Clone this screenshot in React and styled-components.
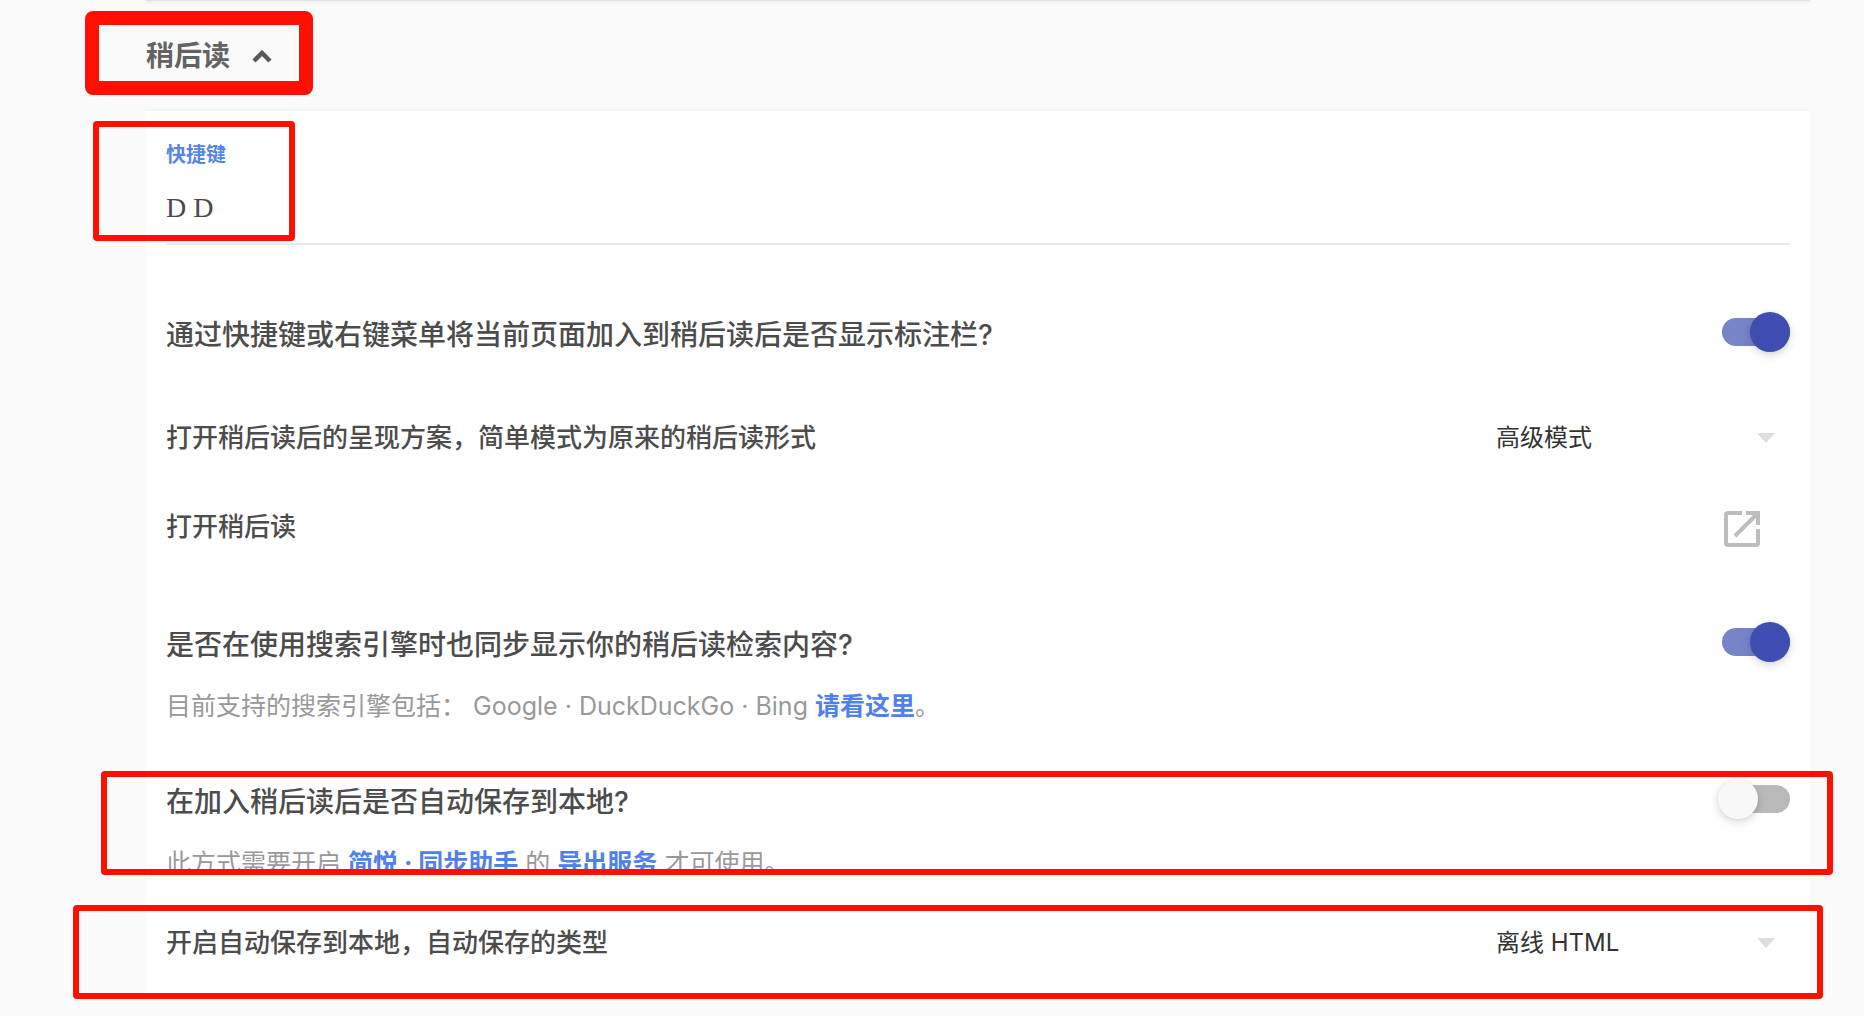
import React, { useState } from "react";
import styled, { createGlobalStyle } from "styled-components";

const GlobalStyle = createGlobalStyle`
  *, *::before, *::after { box-sizing: border-box; }
  body {
    margin: 0;
    background: #fafafa;
    color: #4c4c4c;
    font-family: Inter, "Noto Sans CJK SC", sans-serif;
  }
`;

const Page = styled.main`
  padding: 0 54px 16px 146px;
`;

const PreviousPanel = styled.div`
  height: 1px;
  background: #e2e2e2;
  box-shadow: 0 1px 3px rgba(0, 0, 0, 0.14);
`;

const Header = styled.header`
  position: relative;
  display: flex;
  align-items: center;
  height: 108px;
  padding-top: 2px;
`;

const HeaderButton = styled.button`
  display: flex;
  align-items: center;
  gap: 22px;
  height: 40px;
  padding: 0;
  border: 0;
  background: none;
  color: #636363;
  font: 700 28px/40px Inter, "Noto Sans CJK SC", sans-serif;
  cursor: pointer;
`;

const Panel = styled.section`
  padding: 0 20px 32px;
  border-top: 2px solid #f5f5f5;
  background: #fff;
`;

const Field = styled.div`
  position: relative;
  display: flex;
  flex-direction: column;
  gap: 19px;
  padding-top: 30px;
  border-bottom: 2px solid #e9e9e9;
`;

const FieldLabel = styled.label`
  color: #5585e5;
  font-size: 20px;
  font-weight: 700;
  line-height: 28px;
`;

const FieldInput = styled.input`
  width: 100%;
  height: 40px;
  margin-bottom: 15px;
  padding: 0;
  border: 0;
  outline: 0;
  background: none;
  color: #4a4a4a;
  font: 28px/40px "Liberation Serif", serif;
`;

const Setting = styled.div`
  position: relative;
  margin-top: ${(p) => p.$gap}px;
`;

const Row = styled.div`
  display: flex;
  justify-content: space-between;
  align-items: flex-start;
`;

const Title = styled.label`
  font-size: ${(p) => (p.$large ? 28 : 26)}px;
  font-weight: 500;
  line-height: 46px;
`;

const Note = styled.p`
  margin: 22px 0 0;
  color: #999;
  font-size: 25px;
  line-height: 32px;
`;

const Link = styled.a`
  color: #5080ea;
  font-weight: 700;
  text-decoration: none;
`;

const Switch = styled.input`
  appearance: none;
  display: flex;
  align-items: center;
  flex: none;
  width: 72px;
  height: 40px;
  margin: 0;
  cursor: pointer;

  &::before {
    content: "";
    width: 68px;
    height: 28px;
    margin-left: 4px;
    border-radius: 14px;
    background: ${(p) => (p.checked ? "#7884c8" : "#b9b9b9")};
  }

  &::after {
    content: "";
    flex: none;
    width: 40px;
    height: 40px;
    margin-left: ${(p) => (p.checked ? -40 : -72)}px;
    border-radius: 50%;
    background: ${(p) => (p.checked ? "#3f4db1" : "#f8f8f8")};
    box-shadow: 0 3px 8px rgba(0, 0, 0, 0.16), 0 0 3px rgba(0, 0, 0, 0.06);
  }
`;

const SelectBox = styled.div`
  display: grid;
  grid-template-columns: 1fr 18px 15px;
  align-items: center;
  flex: none;
  width: 294px;
  height: 46px;

  svg {
    grid-area: 1 / 2;
    pointer-events: none;
  }
`;

const Select = styled.select`
  appearance: none;
  grid-area: 1 / 1 / 2 / 4;
  width: 100%;
  height: 46px;
  padding: 0;
  border: 0;
  outline: 0;
  background: none;
  color: #333;
  font: 400 24px/46px Inter, "Noto Sans CJK SC", sans-serif;
`;

const IconButton = styled.button`
  display: flex;
  margin: 7px 30px 0 0;
  padding: 0;
  border: 0;
  background: none;
  cursor: pointer;
`;

const Mark = styled.span`
  position: absolute;
  z-index: 1;
  top: ${(p) => p.$top}px;
  left: ${(p) => p.$left}px;
  right: ${(p) => (p.$right === undefined ? "auto" : `${p.$right}px`)};
  bottom: ${(p) => (p.$bottom === undefined ? "auto" : `${p.$bottom}px`)};
  width: ${(p) => (p.$width ? `${p.$width}px` : "auto")};
  height: ${(p) => (p.$height ? `${p.$height}px` : "auto")};
  border: ${(p) => (p.$thick ? 14 : 6)}px solid #fe1000;
  border-radius: ${(p) => (p.$thick ? 8 : 4)}px;
  pointer-events: none;
`;

const ChevronUp = () => (
  <svg width="20" height="13" viewBox="0 0 20 13" fill="none" aria-hidden="true">
    <path d="M2 11 10 3l8 8" stroke="#5a5a5a" strokeWidth="4.500" />
  </svg>
);

const CaretDown = () => (
  <svg width="18" height="10" viewBox="0 0 18 10" aria-hidden="true">
    <path d="M0 0h18L9 10z" fill="#dedede" />
  </svg>
);

const OpenIcon = () => (
  <svg width="36" height="36" viewBox="0 0 36 36" fill="none" stroke="#bdbdbd" strokeWidth="4" aria-hidden="true">
    <path d="M18 2H4Q2 2 2 4v28q0 2 2 2h28q2 0 2-2V18" />
    <path d="M11 25 32 4" />
    <path d="M22 2h12v12" />
  </svg>
);

function Toggle({ id, initial }) {
  const [on, setOn] = useState(initial);
  return (
    <Switch id={id} type="checkbox" role="switch" checked={on} onChange={(e) => setOn(e.target.checked)} />
  );
}

function Dropdown({ id, options }) {
  return (
    <SelectBox>
      <Select id={id}>
        {options.map((o) => (
          <option key={o}>{o}</option>
        ))}
      </Select>
      <CaretDown />
    </SelectBox>
  );
}

export default function App() {
  const [keys, setKeys] = useState("D D");
  return (
    <>
      <GlobalStyle />
      <Page>
        <PreviousPanel />
        <Header>
          <HeaderButton type="button" aria-expanded="true">
            稍后读
            <ChevronUp />
          </HeaderButton>
          <Mark $thick $top={10} $left={-61} $width={228} $height={84} />
        </Header>
        <Panel>
          <Field>
            <FieldLabel htmlFor="keys">快捷键</FieldLabel>
            <FieldInput id="keys" value={keys} onChange={(e) => setKeys(e.target.value)} />
            <Mark $top={10} $left={-73} $width={202} $height={120} />
          </Field>

          <Setting $gap={67}>
            <Row>
              <Title $large htmlFor="bar">通过快捷键或右键菜单将当前页面加入到稍后读后是否显示标注栏?</Title>
              <Toggle id="bar" initial />
            </Row>
          </Setting>

          <Setting $gap={57}>
            <Row>
              <Title htmlFor="mode">打开稍后读后的呈现方案，简单模式为原来的稍后读形式</Title>
              <Dropdown id="mode" options={["高级模式"]} />
            </Row>
          </Setting>

          <Setting $gap={43}>
            <Row>
              <Title htmlFor="open">打开稍后读</Title>
              <IconButton id="open" type="button">
                <OpenIcon />
              </IconButton>
            </Row>
          </Setting>

          <Setting $gap={72}>
            <Row>
              <Title $large htmlFor="search">是否在使用搜索引擎时也同步显示你的稍后读检索内容?</Title>
              <Toggle id="search" initial />
            </Row>
            <Note>
              目前支持的搜索引擎包括： Google · DuckDuckGo · Bing <Link href="#search">请看这里</Link>。
            </Note>
          </Setting>

          <Setting $gap={57}>
            <Row>
              <Title $large htmlFor="save">在加入稍后读后是否自动保存到本地?</Title>
              <Toggle id="save" initial={false} />
            </Row>
            <Note>
              此方式需要开启 <Link href="#sync">简悦 · 同步助手</Link> 的 <Link href="#export">导出服务</Link> 才可使用。
            </Note>
            <Mark $top={-8} $left={-65} $right={-43} $bottom={4} />
          </Setting>

          <Setting $gap={41}>
            <Row>
              <Title htmlFor="type">开启自动保存到本地，自动保存的类型</Title>
              <Dropdown id="type" options={["离线 HTML"]} />
            </Row>
            <Mark $top={-15} $left={-93} $right={-33} $bottom={-33} />
          </Setting>
        </Panel>
      </Page>
    </>
  );
}
